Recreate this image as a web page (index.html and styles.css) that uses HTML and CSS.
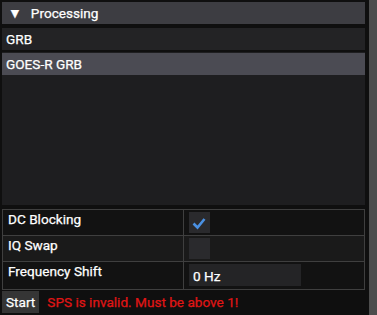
FILE: index.html
```html
<!DOCTYPE html>
<html lang="en">
<head>
    <meta charset="UTF-8">
    <title>Processing</title>
    <link rel="stylesheet" href="styles.css">
</head>
<body>
    <div class="window">
        <div class="panel">
            <div class="header"><span class="arrow">&#9660;</span>Processing</div>
            <div class="combo">GRB</div>
            <div class="list">
                <div class="item selected">GOES-R GRB</div>
            </div>
            <table class="params">
                <tr>
                    <td class="name">DC Blocking</td>
                    <td><span class="check on">
                        <svg width="16" height="16" viewBox="0 0 16 16"><path d="M2.5 8.5 L6.5 12.5 L13.5 4" fill="none" stroke="#4a90e2" stroke-width="2.6"/></svg>
                    </span></td>
                </tr>
                <tr class="alt">
                    <td class="name">IQ Swap</td>
                    <td><span class="check"></span></td>
                </tr>
                <tr>
                    <td class="name">Frequency Shift</td>
                    <td><span class="input">0 Hz</span></td>
                </tr>
            </table>
            <div class="footer">
                <span class="btn">Start</span>
                <span class="error">SPS is invalid. Must be above 1!</span>
            </div>
        </div>
        <div class="scrollbar"></div>
    </div>
</body>
</html>
```

FILE: styles.css
```css
* {
    margin: 0;
    padding: 0;
    box-sizing: border-box;
}

body {
    background-color: #0f0f0f;
    font-family: Roboto, "Liberation Sans", sans-serif;
    font-size: 13.6px;
    color: #fff;
    -webkit-text-stroke: 0.25px currentColor;
}

.window {
    display: flex;
    width: 377px;
    height: 315px;
}

.panel {
    flex: 1;
    padding: 2px 3px 2px 2px;
    display: flex;
    flex-direction: column;
}

.scrollbar {
    width: 8px;
    background-color: #4d4d4d;
    margin-left: 1px;
}

.header {
    height: 22px;
    background-color: #3d3d42;
    display: flex;
    align-items: center;
    padding-left: 6px;
}

.header .arrow {
    font-size: 14px;
    margin-right: 9px;
}

.combo {
    height: 22px;
    margin-top: 4px;
    background-color: #232325;
    display: flex;
    align-items: center;
    padding-left: 4px;
}

.list {
    height: 153px;
    margin-top: 2px;
    background-color: #1e1e20;
    padding-top: 1px;
}

.item {
    height: 22px;
    display: flex;
    align-items: center;
    padding-left: 4px;
}

.item.selected {
    background-color: #4b4b53;
}

.params {
    margin-top: 4px;
    width: 100%;
    border-collapse: collapse;
    background-color: #121212;
}

.params td {
    border: 1px solid #3f3f3f;
    height: 26px;
    vertical-align: top;
    padding: 2px 5px;
}

.params td.name {
    width: 181px;
    padding-top: 1px;
}

.params tr.alt td {
    background-color: #1a1a1a;
}

.params tr:last-child td {
    height: 28px;
}

.check {
    display: block;
    width: 21px;
    height: 21px;
    background-color: #2a2a2d;
    padding: 3px 2px;
}

.check svg {
    display: block;
}

.input {
    display: block;
    width: 112px;
    height: 22px;
    background-color: #242426;
    padding: 4px 4px 0 4px;
}

.footer {
    margin-top: 1px;
    display: flex;
    align-items: center;
}

.btn {
    background-color: #353535;
    height: 22px;
    padding: 0 4px;
    display: flex;
    align-items: center;
}

.error {
    color: #e01515;
    margin-left: 8px;
}
```
